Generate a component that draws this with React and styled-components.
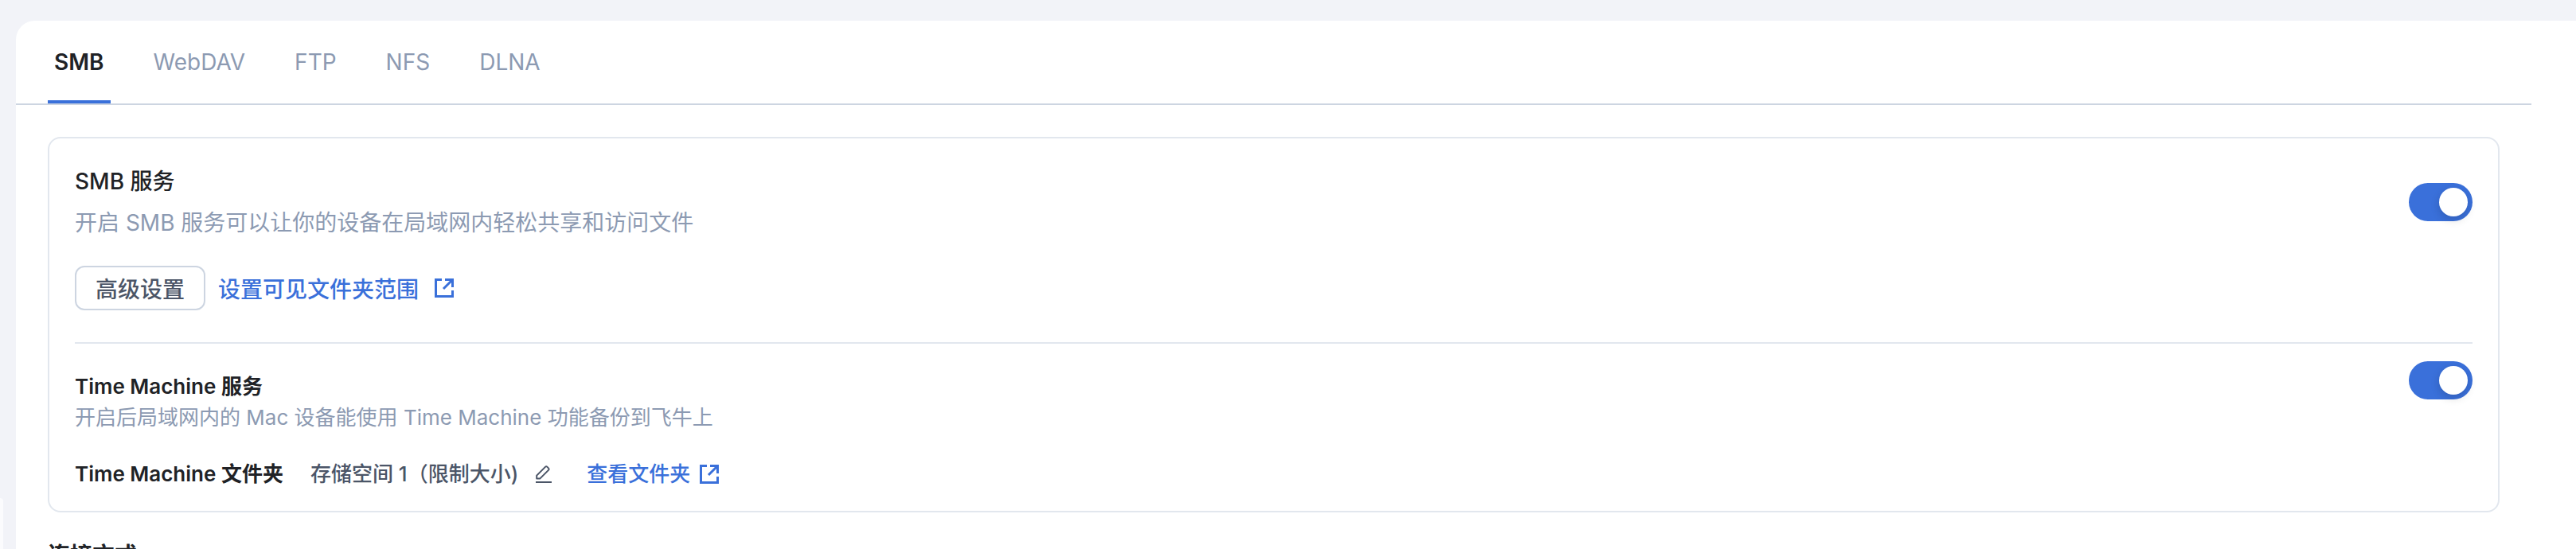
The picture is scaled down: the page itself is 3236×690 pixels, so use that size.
import { useState } from 'react'
import styled, { createGlobalStyle } from 'styled-components'

const tabs = ['SMB', 'WebDAV', 'FTP', 'NFS', 'DLNA']

const OpenIcon = () => (
  <svg width="24" height="24" viewBox="0 0 24 24" fill="none" stroke="currentColor" strokeWidth="3" aria-hidden="true">
    <path d="M9 1.5H1.5V22.5H22.5V15" />
    <path d="M13 1.5H22.5V11" />
    <path d="M22 2L11 13" />
  </svg>
)

const PenIcon = () => (
  <svg width="20" height="22" viewBox="0 0 20 22" fill="none" stroke="currentColor" strokeWidth="2" aria-hidden="true">
    <path d="M1.2 16.6V12.6L12.2 1.6C12.8 1 13.6 1 14.2 1.6L16.2 3.6C16.8 4.2 16.8 5 16.2 5.6L5.2 16.6Z" strokeLinejoin="round" />
    <path d="M0 21H20" />
  </svg>
)

const App = () => {
  const [active, setActive] = useState('SMB')
  const [smb, setSmb] = useState(true)
  const [timeMachine, setTimeMachine] = useState(true)

  return (
    <>
      <GlobalStyle />
      <Page>
        <Sidebar>
          <SidebarItem />
        </Sidebar>
        <Panel>
          <TabBar>
            {tabs.map((tab) => (
              <Tab key={tab} type="button" $active={tab === active} onClick={() => setActive(tab)}>
                {tab}
              </Tab>
            ))}
          </TabBar>
          <Content>
            <Card>
              <Section>
                <Header>
                  <Text>
                    <Title id="smb">SMB 服务</Title>
                    <Desc>开启 SMB 服务可以让你的设备在局域网内轻松共享和访问文件</Desc>
                  </Text>
                  <Switch aria-labelledby="smb" checked={smb} onChange={(e) => setSmb(e.target.checked)} />
                </Header>
                <Actions>
                  <Button type="button">高级设置</Button>
                  <Link href="#scope" $gap={20}>
                    设置可见文件夹范围
                    <OpenIcon />
                  </Link>
                </Actions>
              </Section>
              <TimeSection>
                <TimeHeader>
                  <TimeText>
                    <TimeTitle id="time-machine">Time Machine 服务</TimeTitle>
                    <Desc>开启后局域网内的 Mac 设备能使用 Time Machine 功能备份到飞牛上</Desc>
                  </TimeText>
                  <Switch
                    aria-labelledby="time-machine"
                    checked={timeMachine}
                    onChange={(e) => setTimeMachine(e.target.checked)}
                  />
                </TimeHeader>
                <FolderRow>
                  <FolderLabel>Time Machine 文件夹</FolderLabel>
                  <FolderValue>
                    存储空间 1（限制大小)
                    <EditButton type="button" aria-label="编辑">
                      <PenIcon />
                    </EditButton>
                  </FolderValue>
                  <Link href="#folder" $gap={12}>
                    查看文件夹
                    <OpenIcon />
                  </Link>
                </FolderRow>
              </TimeSection>
            </Card>
            <Heading>连接方式</Heading>
          </Content>
        </Panel>
      </Page>
    </>
  )
}

const GlobalStyle = createGlobalStyle`
  * {
    box-sizing: border-box;
  }
  body {
    margin: 0;
    background: #f2f3f8;
    font-family: Inter, "Noto Sans CJK SC", sans-serif;
    font-size: 28px;
    color: #202226;
  }
  button {
    font: inherit;
    cursor: pointer;
  }
`;

const Page = styled.div`
  display: flex;
  height: 100vh;
  padding-top: 26px;
  overflow: hidden;
`;

const Sidebar = styled.aside`
  flex: 0 0 20px;
  padding: 600px 16px 0 0;
`;

const SidebarItem = styled.div`
  height: 68px;
  border-radius: 0 12px 12px 0;
  background: #fbfbfd;
`;

const Panel = styled.main`
  flex: 1;
  min-width: 0;
  padding-right: 56px;
  background: #fff;
  border-top-left-radius: 24px;
`;

const TabBar = styled.nav`
  display: flex;
  gap: 46px;
  padding-left: 40px;
  border-bottom: 2px solid #cdd5e1;
`;

const Tab = styled.button`
  height: 104px;
  padding: 4px 8px 0;
  border: none;
  border-bottom: 4px solid ${(p) => (p.$active ? '#3a70da' : 'transparent')};
  background: none;
  color: ${(p) => (p.$active ? '#202226' : '#8c9ab2')};
  font-weight: ${(p) => (p.$active ? 600 : 400)};
`;

const Content = styled.div`
  padding: 40px 40px 0;
`;

const Card = styled.section`
  padding: 0 32px;
  border: 2px solid #e2e7ee;
  border-radius: 16px;
`;

const Section = styled.div`
  padding: 32px 0 40px;
`;

const TimeSection = styled.div`
  padding: 22px 0 26px;
  border-top: 2px solid #e2e7ee;
  font-size: 26px;
`;

const Header = styled.div`
  display: flex;
  align-items: center;
  justify-content: space-between;
`;

const TimeHeader = styled(Header)`
  align-items: flex-start;
`;

const Text = styled.div`
  display: flex;
  flex-direction: column;
  gap: 8px;
  line-height: 44px;
`;

const TimeText = styled(Text)`
  gap: 0;
  padding-top: 12px;
  line-height: 39px;
`;

const Title = styled.div`
  font-weight: 500;
`;

const TimeTitle = styled.div`
  font-weight: 600;
`;

const Desc = styled.div`
  color: #8c9ab2;
`;

const Switch = styled.input.attrs({ type: 'checkbox', role: 'switch' })`
  appearance: none;
  display: flex;
  flex: none;
  width: 80px;
  height: 48px;
  margin: 0;
  padding: 6px;
  border-radius: 24px;
  background: #c4ccd8;
  cursor: pointer;

  &::before {
    content: '';
    width: 36px;
    height: 36px;
    border-radius: 50%;
    background: #fff;
    box-shadow: 0 4px 12px rgba(0, 0, 0, 0.16);
  }

  &:checked {
    justify-content: flex-end;
    background: #3a70da;
  }
`;

const Actions = styled.div`
  display: flex;
  align-items: center;
  gap: 16px;
  margin-top: 32px;
`;

const Button = styled.button`
  height: 56px;
  padding: 0 24px;
  border: 2px solid #cdd5e1;
  border-radius: 12px;
  background: #fff;
  color: #4b5567;
  font-weight: 500;
`;

const Link = styled.a`
  display: inline-flex;
  align-items: center;
  gap: ${(p) => p.$gap}px;
  color: #3a70da;
  font-weight: 500;
  text-decoration: none;
`;

const FolderRow = styled.div`
  display: flex;
  align-items: center;
  margin-top: 32px;
  line-height: 40px;
`;

const FolderLabel = styled.span`
  margin-right: 34px;
  font-weight: 600;
`;

const FolderValue = styled.span`
  display: inline-flex;
  align-items: center;
  gap: 22px;
  margin-right: 44px;
  color: #4b5567;
  font-weight: 500;
`;

const EditButton = styled.button`
  display: flex;
  padding: 0;
  border: none;
  background: none;
  color: inherit;
`;

const Heading = styled.h2`
  margin: 32px 0 0;
  font-size: 28px;
  font-weight: 600;
  line-height: 44px;
`;

export default App
